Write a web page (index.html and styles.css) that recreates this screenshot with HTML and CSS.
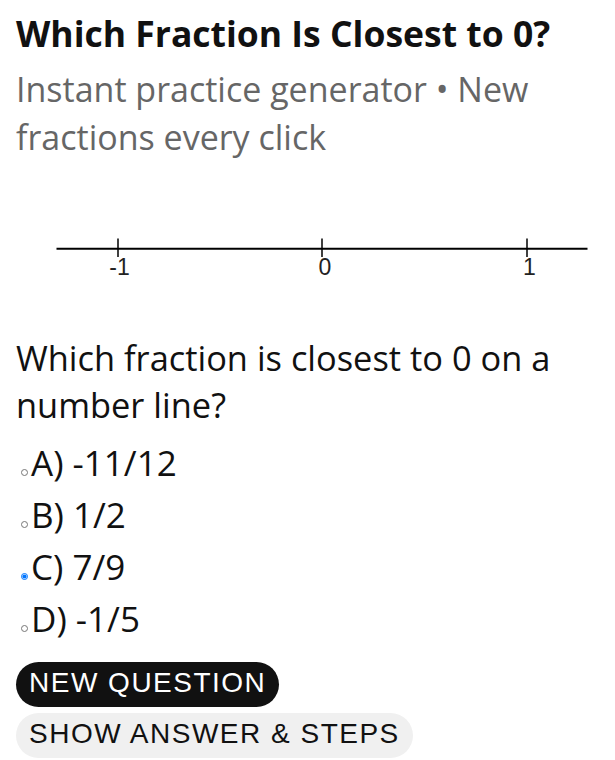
FILE: index.html
```html
<!DOCTYPE html>
<html lang="en">
<head>
<meta charset="utf-8">
<title>Which Fraction Is Closest to 0?</title>
<link rel="stylesheet" href="styles.css">
</head>
<body>
<main class="page">
  <h1 class="title">Which Fraction Is Closest to 0?</h1>
  <p class="subtitle">Instant practice generator • New fractions every click</p>

  <svg class="numberline" width="583" height="90" viewBox="0 0 583 90" aria-label="Number line from -1 to 1">
    <line x1="40.5" y1="38.7" x2="571.5" y2="38.7" stroke="#000" stroke-width="2"/>
    <line x1="102" y1="28.5" x2="102" y2="47" stroke="#000" stroke-width="1.5"/>
    <line x1="306" y1="28.5" x2="306" y2="47" stroke="#000" stroke-width="1.5"/>
    <line x1="511" y1="28.5" x2="511" y2="47" stroke="#000" stroke-width="1.5"/>
    <text x="103.5" y="64.5" class="tick-label">-1</text>
    <text x="309" y="64.5" class="tick-label">0</text>
    <text x="513.3" y="64.5" class="tick-label">1</text>
  </svg>

  <p class="question">Which fraction is closest to 0 on a number line?</p>

  <form class="options">
    <label class="option"><input type="radio" name="answer" value="A">A) -11/12</label>
    <label class="option"><input type="radio" name="answer" value="B">B) 1/2</label>
    <label class="option"><input type="radio" name="answer" value="C" checked>C) 7/9</label>
    <label class="option"><input type="radio" name="answer" value="D">D) -1/5</label>
  </form>

  <div class="actions">
    <button type="button" class="btn btn-primary">NEW QUESTION</button>
    <button type="button" class="btn btn-secondary">SHOW ANSWER &amp; STEPS</button>
  </div>
</main>
</body>
</html>
```

FILE: styles.css
```css
html, body {
  margin: 0;
  padding: 0;
  background: #fff;
}

.page {
  padding: 0 16px;
  font-family: "Open Sans", "Noto Sans", sans-serif;
  color: #111;
}

.title {
  margin: 13.3px 0 0;
  font-size: 35.5px;
  font-weight: 700;
  line-height: 41px;
  color: #111;
}

.subtitle {
  margin: 11.1px 0 0;
  font-size: 34px;
  line-height: 48px;
  color: #666;
}

.numberline {
  display: block;
  margin-top: 48.6px;
}

.tick-label {
  font-family: "Liberation Sans", Arial, sans-serif;
  font-size: 23px;
  text-anchor: middle;
  fill: #222;
}

.question {
  margin: 35.1px 0 0;
  font-size: 34.4px;
  line-height: 46.5px;
  color: #111;
}

.options {
  margin: 9.3px 0 0;
  display: flex;
  flex-direction: column;
}

.option {
  font-size: 35px;
  line-height: 52px;
  color: #111;
}

.option input {
  width: 7px;
  height: 7px;
  margin: 3px 3px 0 5px;
  vertical-align: baseline;
}

.actions {
  margin-top: 16.3px;
  display: flex;
  flex-direction: column;
  align-items: flex-start;
  gap: 6px;
}

.btn {
  font-family: "Liberation Sans", Arial, sans-serif;
  font-size: 28px;
  letter-spacing: 1.5px;
  height: 45px;
  line-height: 42px;
  padding: 0 13px 3px 13px;
  border: none;
  border-radius: 23px;
  cursor: pointer;
}

.btn-primary {
  background: #111;
  color: #fff;
}

.btn-secondary {
  background: #f0f0f0;
  color: #111;
}
```
